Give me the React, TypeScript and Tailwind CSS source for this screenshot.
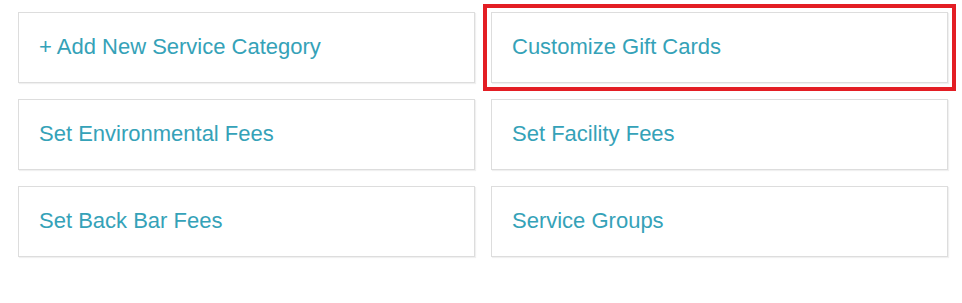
const items = [
  { label: '+ Add New Service Category' },
  { label: 'Customize Gift Cards', selected: true },
  { label: 'Set Environmental Fees' },
  { label: 'Set Facility Fees' },
  { label: 'Set Back Bar Fees' },
  { label: 'Service Groups' },
];

export default function App() {
  return (
    <div className="min-h-[303px] bg-white px-[18px] pt-[12px] font-['Liberation_Sans']">
      <div className="grid w-[930px] grid-cols-2 gap-x-[16px] gap-y-[16px]">
        {items.map((item) => (
          <a
            key={item.label}
            href="#"
            className={
              item.selected
                ? 'flex h-[71px] items-center border border-[#dddddd] bg-white pb-[2px] pl-[20px] text-[22px] text-[#35a2b8] shadow-[1px_1px_1px_rgba(0,0,0,0.06)] outline-4 outline-offset-4 outline-[#e31e24] outline-solid'
                : 'flex h-[71px] items-center border border-[#dddddd] bg-white pb-[2px] pl-[20px] text-[22px] text-[#35a2b8] shadow-[1px_1px_1px_rgba(0,0,0,0.06)]'
            }
          >
            {item.label}
          </a>
        ))}
      </div>
    </div>
  );
}
